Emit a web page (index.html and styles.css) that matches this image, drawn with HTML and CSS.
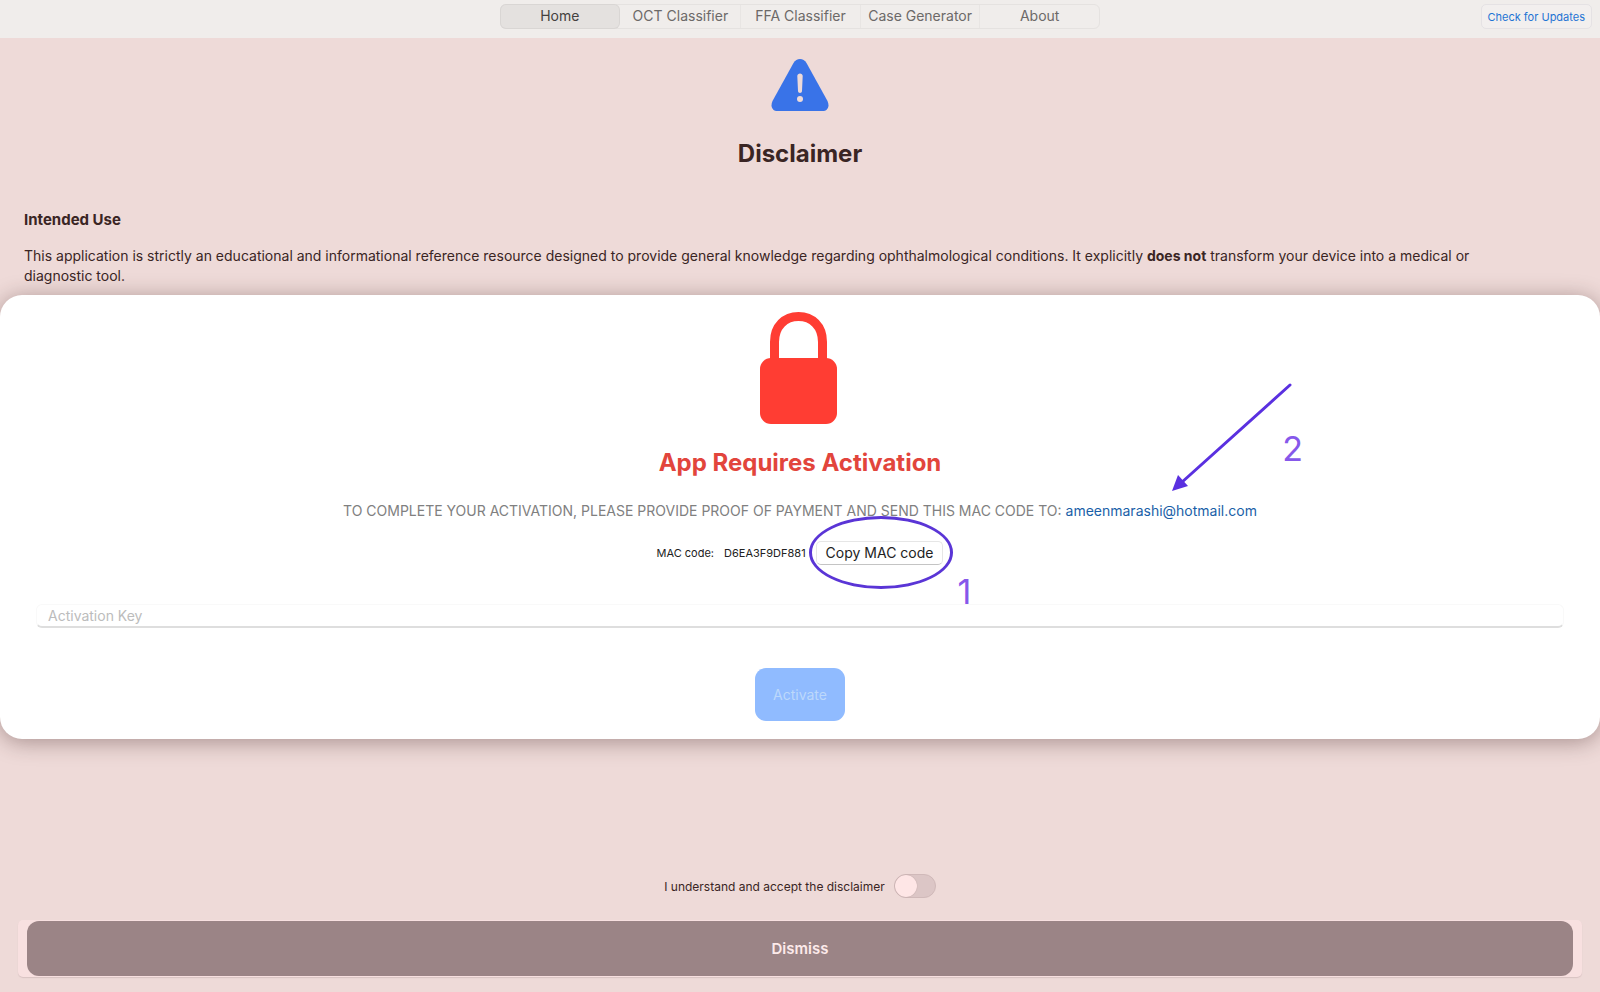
FILE: index.html
```html
<!DOCTYPE html>
<html lang="en">
<head>
    <meta charset="UTF-8">
    <meta name="viewport" content="width=device-width, initial-scale=1.0">
    <title>App Activation</title>
    <link rel="stylesheet" href="styles.css">
</head>
<body>
    <header class="toolbar">
        <nav class="tabs">
            <button type="button" class="tab active">Home</button>
            <button type="button" class="tab">OCT Classifier</button>
            <button type="button" class="tab">FFA Classifier</button>
            <button type="button" class="tab">Case Generator</button>
            <button type="button" class="tab">About</button>
        </nav>
        <button type="button" class="update-btn">Check for Updates</button>
    </header>

    <main class="page">
        <section class="disclaimer">
            <svg class="warning-icon" viewBox="0 0 58 52" aria-hidden="true">
                <path fill="#3973e8" d="M22.500 4 C25.500 -1.300 32.500 -1.300 35.500 4 L56.500 42 C59 47.500 56.500 52 51.500 52 H6.500 C1.500 52 -1 47.500 1.500 42 Z"/>
                <path fill="#eedad8" d="M26.300 17 C26.300 13.500 31.700 13.500 31.700 17 L31 32 C31 34.500 27 34.500 27 32 Z"/>
                <circle cx="29" cy="40" r="3" fill="#eedad8"/>
            </svg>
            <h1>Disclaimer</h1>
            <h2>Intended Use</h2>
            <p>This application is strictly an educational and informational reference resource designed to provide general knowledge regarding ophthalmological conditions. It explicitly <strong>does not</strong> transform your device into a medical or diagnostic tool.</p>
        </section>

        <section class="accept">
            <label class="accept-row">
                I understand and accept the disclaimer
                <input type="checkbox" class="switch">
            </label>
            <div class="dismiss-frame">
                <button type="button" class="dismiss-btn">Dismiss</button>
            </div>
        </section>

        <!-- Activation sheet -->
        <div class="overlay">
            <form class="sheet" role="dialog" aria-labelledby="sheet-title">
                <svg class="lock-icon" viewBox="0 0 80 112" aria-hidden="true">
                    <path fill="none" stroke="#ff3d33" stroke-width="9" d="M14.500 50 V30 C14.500 14 25 4.500 38.500 4.500 C52 4.500 62.500 14 62.500 30 V50"/>
                    <rect y="46" width="77" height="66" rx="11" fill="#ff3d33"/>
                </svg>
                <h2 id="sheet-title">App Requires Activation</h2>
                <p class="instructions">
                    TO COMPLETE YOUR ACTIVATION, PLEASE PROVIDE PROOF OF PAYMENT AND SEND THIS MAC CODE TO:
                    <span class="marked">
                        <a href="mailto:ameenmarashi@hotmail.com">ameenmarashi@hotmail.com</a>
                        <svg class="arrow" viewBox="0 0 120 110" aria-hidden="true">
                            <path stroke="#5a30e0" stroke-width="3" stroke-linecap="round" d="M118 2 L9 100"/>
                            <path fill="#5a30e0" d="M0 108 L6 92 L16 103 Z"/>
                        </svg>
                        <span class="step step-two">2</span>
                    </span>
                </p>
                <div class="mac-row">
                    <span>MAC code:</span>
                    <span>D6EA3F9DF881</span>
                    <span class="marked">
                        <button type="button" class="copy-btn">Copy MAC code</button>
                        <span class="ring"></span>
                        <span class="step step-one">1</span>
                    </span>
                </div>
                <input type="text" class="key-input" placeholder="Activation Key" aria-label="Activation Key">
                <button type="submit" class="activate-btn" disabled>Activate</button>
            </form>
        </div>
    </main>
</body>
</html>
```
FILE: styles.css
```css
* {
    box-sizing: border-box;
}

body {
    margin: 0;
    min-height: 100vh;
    display: flex;
    flex-direction: column;
    font-family: Inter, "Liberation Sans", sans-serif;
    font-size: 14px;
    color: #3a2524;
    background: #eedad8;
}

button,
input {
    font-family: inherit;
    margin: 0;
}

h1,
h2,
p {
    margin: 0;
}

/* Toolbar */
.toolbar {
    display: grid;
    grid-template-columns: 1fr 600px 1fr;
    align-items: start;
    height: 38px;
    padding: 4px 8px;
    background: #f0edeb;
}

.tabs {
    grid-column: 2;
    display: grid;
    grid-template-columns: repeat(5, 1fr);
    height: 25px;
    border: 1px solid #e5e2e0;
    border-radius: 6px;
}

.tab {
    padding: 0 0 2px;
    border: none;
    background: none;
    color: #6c6968;
    font-size: 14px;
    white-space: nowrap;
}

.tab + .tab + .tab {
    border-left: 1px solid #e8e5e3;
}

.tab.active {
    margin-right: 2px;
    background: #e4e1df;
    color: #444140;
    border-radius: 5px;
    box-shadow: 0 0 0 1px #d9d6d4;
}

.update-btn {
    justify-self: end;
    height: 25px;
    padding: 0 6px;
    border: 1px solid #e5e2e4;
    border-radius: 5px;
    background: #f2efee;
    color: #1f74d4;
    font-size: 11px;
}

/* Disclaimer page */
.page {
    position: relative;
    flex: 1;
    display: flex;
    flex-direction: column;
    justify-content: space-between;
}

.disclaimer {
    display: flex;
    flex-direction: column;
    padding: 21px 24px 0;
}

.warning-icon {
    align-self: center;
    width: 58px;
    height: 52px;
}

.disclaimer h1 {
    margin-top: 28px;
    font-size: 24px;
    line-height: 30px;
    text-align: center;
}

.disclaimer h2 {
    margin-top: 41px;
    font-size: 15px;
    line-height: 20px;
}

.disclaimer p {
    margin-top: 16px;
    padding-right: 60px;
    line-height: 20px;
}

.accept {
    padding: 0 18px 15px;
}

.accept-row {
    display: flex;
    justify-content: center;
    align-items: center;
    gap: 9px;
    margin-bottom: 22px;
    font-size: 12px;
}

.switch {
    appearance: none;
    width: 42px;
    height: 24px;
    border: 1px solid #d0b9b9;
    border-radius: 12px;
    background: #dcc6c6;
}

.switch::before {
    content: "";
    display: block;
    width: 22px;
    height: 22px;
    border-radius: 50%;
    background: #fee6e6;
    box-shadow: 0 0 1px #a98f8f;
}

.dismiss-frame {
    padding: 1px 9px;
    border-radius: 5px;
    background: #f8e0e0;
    box-shadow: 0 1px 1px #d8c2c2;
}

.dismiss-btn {
    display: block;
    width: 100%;
    height: 55px;
    border: none;
    border-radius: 12px;
    background: #9b8486;
    color: #fdeaea;
    font-size: 15px;
    font-weight: 600;
}

/* Activation sheet */
.overlay {
    position: absolute;
    inset: 0;
    display: flex;
    align-items: center;
    padding-top: 3px;
}

.sheet {
    width: 100%;
    display: flex;
    flex-direction: column;
    align-items: center;
    padding: 17px 36px 18px;
    border-radius: 22px;
    background: #fff;
    color: #222;
    box-shadow: 0 3px 22px rgba(60, 30, 30, 0.4);
}

.lock-icon {
    width: 80px;
    height: 112px;
}

.sheet h2 {
    margin-top: 24px;
    color: #e2453c;
    font-size: 24px;
    line-height: 30px;
}

.instructions {
    margin-top: 23px;
    color: #808080;
    line-height: 20px;
}

.instructions a {
    color: #1a5fa8;
    text-decoration: none;
}

.mac-row {
    display: flex;
    align-items: center;
    gap: 10px;
    margin-top: 20px;
    font-size: 11px;
}

.copy-btn {
    display: block;
    height: 24px;
    padding: 0 9px;
    border: 1px solid #e6e6e6;
    border-bottom-color: #c4c4c4;
    border-radius: 5px;
    background: #fff;
    color: #222;
    font-size: 14px;
}

.key-input {
    width: 100%;
    height: 24px;
    margin-top: 39px;
    padding: 0 11px;
    border: 1px solid #f9f9f9;
    border-bottom: 2px solid #dedede;
    border-radius: 6px;
    background: #fff;
    font-size: 14px;
}

.key-input::placeholder {
    color: #bcbcbc;
}

.activate-btn {
    height: 53px;
    margin-top: 40px;
    padding: 0 18px;
    border: none;
    border-radius: 11px;
    background: #90bbff;
    color: #bcd8fb;
    font-size: 14px;
}

/* Step markers drawn over the sheet */
.marked {
    position: relative;
}

.ring {
    position: absolute;
    inset: -25px -10px -24px -7px;
    border: 3px solid #5a35d6;
    border-radius: 50%;
    pointer-events: none;
}

.arrow {
    position: absolute;
    left: 106px;
    bottom: 26px;
    width: 120px;
    height: 110px;
}

.step {
    position: absolute;
    color: #8658ea;
    font-size: 34px;
    line-height: 36px;
}

.step-one {
    top: 33px;
    right: -28px;
}

.step-two {
    right: -46px;
    bottom: 52px;
}
```
